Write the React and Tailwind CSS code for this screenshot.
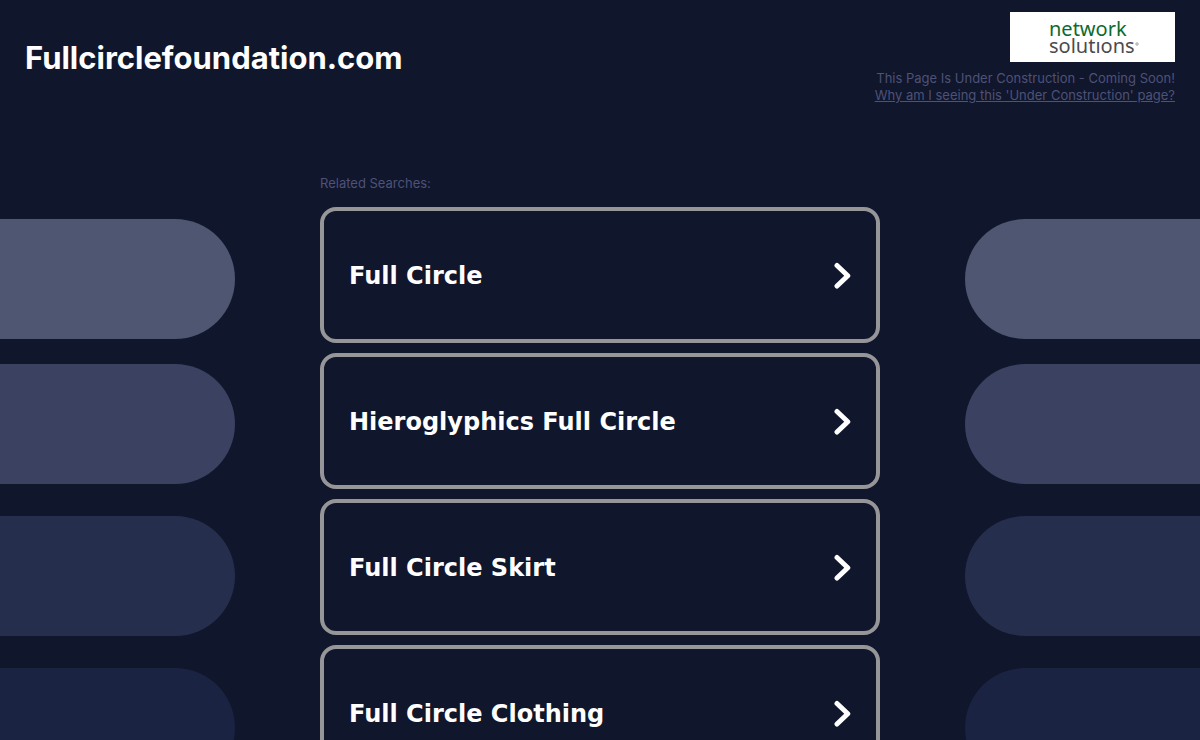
const searches = [
    'Full Circle',
    'Hieroglyphics Full Circle',
    'Full Circle Skirt',
    'Full Circle Clothing',
];

const NetworkSolutionsLogo = () => (
    <svg viewBox="0 0 165 50" className="block w-[165px] h-[50px] bg-white" role="img" aria-label="network solutions">
        <text fontFamily="'Noto Sans', sans-serif" fontSize="20">
            <tspan x="39" y="24" fill="#0b6b2c">network</tspan>
            <tspan x="39" y="41" fill="#4b4b4f">solutıons</tspan>
        </text>
        <circle cx="127" cy="32" r="1.2" fill="none" stroke="#8a8a8e" strokeWidth="0.8" />
    </svg>
);

const Chevron = () => (
    <svg viewBox="0 0 18 28" className="w-[18px] h-7 shrink-0" fill="none" stroke="#ffffff" strokeWidth="5" strokeLinecap="round" strokeLinejoin="round" aria-hidden="true">
        <path d="M4 3.5 L14.8 13.7 L4 24" />
    </svg>
);

const Pills = ({ side }) => {
    const shape = side === 'left' ? 'rounded-r-full mr-[85px]' : 'rounded-l-full ml-[85px]';
    return (
        <div className="flex-1 pt-[49px]" aria-hidden="true">
            <div className={`h-[120px] bg-[#4e5672] ${shape}`} />
            <div className={`h-[120px] mt-[25px] bg-[#3b4261] ${shape}`} />
            <div className={`h-[120px] mt-8 bg-[#262e4d] ${shape}`} />
            <div className={`h-[120px] mt-8 bg-[#1b2342] ${shape}`} />
        </div>
    );
};

const App = () => {
    return (
        <div className="h-screen overflow-x-hidden bg-[#10162b] font-['Inter',sans-serif] text-[#4e5178]">
            <header className="flex items-start justify-between px-[25px] pt-3">
                <h1 className="pt-7 text-[31px] leading-9 font-bold text-white">Fullcirclefoundation.com</h1>
                <div className="flex flex-col items-end text-[13px] leading-[17px]">
                    <NetworkSolutionsLogo />
                    <p className="mt-2">This Page Is Under Construction - Coming Soon!</p>
                    <a href="#why" className="underline">Why am I seeing this 'Under Construction' page?</a>
                </div>
            </header>

            <main className="flex mt-[66px]">
                <Pills side="left" />
                <section className="w-[560px]">
                    <h2 className="pt-[5px] text-[13px] leading-[17px]">Related Searches:</h2>
                    <ul className="mt-[15px] flex flex-col gap-[10px]">
                        {searches.map((term) => (
                            <li key={term}>
                                <a
                                    href="#search"
                                    className="flex items-center justify-between h-[136px] px-[25px] pt-[2px] border-4 border-[#969598] rounded-2xl font-['DejaVu_Sans',sans-serif] text-2xl font-bold text-white"
                                >
                                    {term}
                                    <Chevron />
                                </a>
                            </li>
                        ))}
                    </ul>
                </section>
                <Pills side="right" />
            </main>
        </div>
    );
};

export default App;
